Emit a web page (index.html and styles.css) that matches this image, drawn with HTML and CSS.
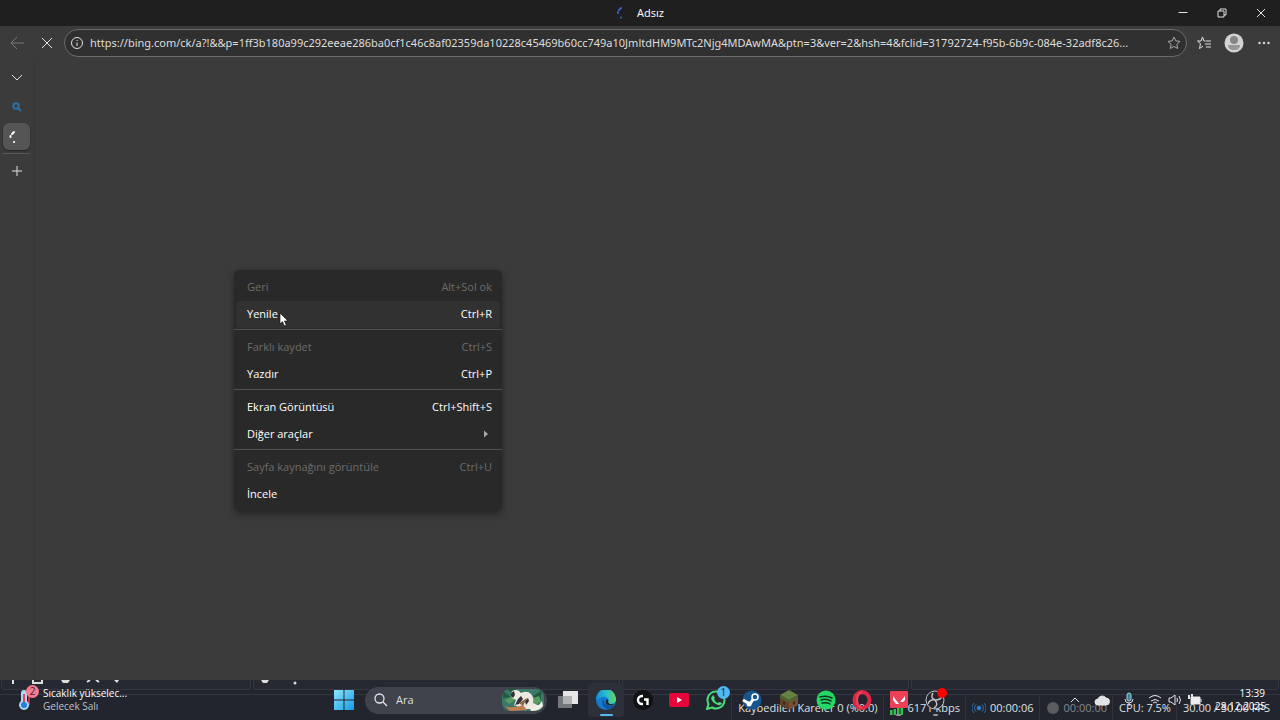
FILE: index.html
```html
<!DOCTYPE html>
<html lang="tr">
<head>
    <meta charset="UTF-8">
    <title>Adsız</title>
    <link rel="stylesheet" href="styles.css">
</head>
<body>
    <header class="titlebar">
        <div class="window-title">
            <svg width="10" height="14" viewBox="0 0 10 14" fill="none" stroke="#3d5fb8" stroke-width="2" stroke-linecap="round"><path d="M5 2L3 4M2 6v1M5 11.500h.1"/></svg>
            <span>Adsız</span>
        </div>
        <div class="window-buttons">
            <button class="window-button" aria-label="Simge durumuna küçült"><svg width="10" height="10" viewBox="0 0 10 10"><path d="M.5 4.500h9"/></svg></button>
            <button class="window-button" aria-label="Geri yükle"><svg width="10" height="10" viewBox="0 0 10 10"><path d="M1 3h6v6H1zM3 3V1h6v6H7"/></svg></button>
            <button class="window-button" aria-label="Kapat"><svg width="10" height="10" viewBox="0 0 10 10"><path d="M1 1l8 8M9 1L1 9"/></svg></button>
        </div>
    </header>

    <div class="toolbar">
        <button class="tool-button" disabled aria-label="Geri"><svg width="16" height="16" viewBox="0 0 16 16"><path d="M15 8H2M8 2L2 8l6 6"/></svg></button>
        <button class="tool-button" aria-label="Durdur"><svg width="12" height="12" viewBox="0 0 12 12"><path d="M1 1l10 10M11 1L1 11"/></svg></button>
        <div class="address">
            <svg width="14" height="14" viewBox="0 0 14 14"><circle cx="7" cy="7" r="5.500"/><path d="M7 6.500V10M7 4v1"/></svg>
            <input class="address-input" type="text" aria-label="Adres" readonly value="https://bing.com/ck/a?!&amp;&amp;p=1ff3b180a99c292eeae286ba0cf1c46c8af02359da10228c45469b60cc749a10JmltdHM9MTc2Njg4MDAwMA&amp;ptn=3&amp;ver=2&amp;hsh=4&amp;fclid=31792724-f95b-6b9c-084e-32adf8c26...">
            <svg class="star" width="14" height="14" viewBox="0 0 14 14"><path d="M7 1l1.800 3.900 4.200.5-3.100 2.900.8 4.200L7 10.400l-3.700 2.100.8-4.200L1 5.400l4.200-.5z"/></svg>
        </div>
        <div class="tools">
            <button class="tool-button" aria-label="Sık kullanılanlar"><svg width="14" height="14" viewBox="0 0 14 14"><path d="M8.500 5H7L5.500 1 4 5H.5l3 2.700-1 4.800L6 10.200M9 5h5M8 8h6M9 11h5"/></svg></button>
            <button class="tool-button" aria-label="Profil">
                <svg class="avatar" width="20" height="20" viewBox="0 0 20 20"><circle cx="10" cy="10" r="9.500" fill="#d3d3d3"/><circle cx="10" cy="7" r="4" fill="#858585"/><path d="M4 12h12c0 3-2 5-6 5s-6-2-6-5z" fill="#979797"/></svg>
            </button>
            <button class="tool-button" aria-label="Ayarlar"><svg class="solid" width="12" height="4" viewBox="0 0 12 4"><circle cx="1.500" cy="2" r="1.200"/><circle cx="6" cy="2" r="1.200"/><circle cx="10.500" cy="2" r="1.200"/></svg></button>
        </div>
    </div>

    <div class="browser">
        <aside class="tabs">
            <button class="tab" aria-label="Sekme menüsü"><svg width="12" height="12" viewBox="0 0 12 12"><path d="M1 4l5 5 5-5"/></svg></button>
            <button class="tab tab-search" aria-label="Arama"><svg width="10" height="10" viewBox="0 0 10 10"><circle cx="4" cy="4" r="2.700"/><path d="M6 6l3 3"/></svg></button>
            <button class="tab active" aria-label="Adsız"><svg width="12" height="14" viewBox="0 0 12 14"><path d="M6 2L4 4M2.500 6v1M6 12h.1"/></svg></button>
            <button class="tab tab-new" aria-label="Yeni sekme"><svg width="12" height="12" viewBox="0 0 12 12"><path d="M6 1v10M1 6h10"/></svg></button>
        </aside>
        <main class="page"></main>
    </div>

    <div class="context-menu" role="menu">
        <button class="menu-item" role="menuitem" disabled><span>Geri</span><span>Alt+Sol ok</span></button>
        <button class="menu-item selected" role="menuitem"><span>Yenile</span><span>Ctrl+R</span></button>
        <hr>
        <button class="menu-item" role="menuitem" disabled><span>Farklı kaydet</span><span>Ctrl+S</span></button>
        <button class="menu-item" role="menuitem"><span>Yazdır</span><span>Ctrl+P</span></button>
        <hr>
        <button class="menu-item" role="menuitem"><span>Ekran Görüntüsü</span><span>Ctrl+Shift+S</span></button>
        <button class="menu-item" role="menuitem"><span>Diğer araçlar</span><svg width="12" height="8" viewBox="0 0 12 8"><path d="M4 .5l4 3.500-4 3.500z" fill="#aaa"/></svg></button>
        <hr>
        <button class="menu-item" role="menuitem" disabled><span>Sayfa kaynağını görüntüle</span><span>Ctrl+U</span></button>
        <button class="menu-item" role="menuitem"><span>İncele</span></button>
    </div>
    <svg class="cursor" width="10" height="15" viewBox="0 0 10 15"><path d="M1 1v11l2.500-2.300L5.300 14l2-1-1.800-4H9z" fill="#fff" stroke="#111" stroke-width=".7"/></svg>

    <footer class="desktop-bar">
        <!-- recorder window showing through the taskbar -->
        <div class="docks">
            <div class="dock dock-scenes">
                <svg width="130" height="5" viewBox="0 0 130 5" fill="none" stroke="#ddd" stroke-width="2"><path d="M11 0v4M31 0v3h9V0M88 0l-3 2M94 0l3 2"/><path d="M59 0h9l-2 3h-5zM112 0h5l-2 3z" fill="#ddd" stroke="none"/></svg>
            </div>
            <div class="dock dock-sources">
                <svg width="60" height="6" viewBox="0 0 60 6" fill="#ddd"><path d="M7 0h8l-2 3H9z"/><circle cx="41" cy="3" r="1.500"/></svg>
            </div>
            <div class="dock dock-mixer"></div>
            <div class="dock dock-controls"></div>
        </div>
        <div class="statusbar">
            <span class="status">Kaybedilen Kareler 0 (%0.0)</span>
            <span class="status"><svg width="14" height="14" viewBox="0 0 14 14" fill="#2fc34b"><path d="M0 9h2.500v5H0zM3.500 8H6v6H3.500zM7 6h2.500v8H7zM10.500 4H13v10h-2.500z"/></svg>6171 kbps</span>
            <span class="status"><svg width="14" height="14" viewBox="0 0 14 14" fill="none" stroke="#2b6fae"><circle cx="7" cy="7" r="2" fill="#3689da"/><path d="M4 3.500a5 5 0 0 0 0 7M10 3.500a5 5 0 0 1 0 7M2 2a7 7 0 0 0 0 10M12 2a7 7 0 0 1 0 10"/></svg>00:00:06</span>
            <span class="status idle"><svg width="14" height="14" viewBox="0 0 14 14"><circle cx="7" cy="7" r="6" fill="#5b5c62"/></svg>00:00:00</span>
            <span class="status">CPU: 7.5%</span>
            <span class="status">30.00 / 30.00 FPS</span>
        </div>

        <div class="taskbar">
            <button class="weather">
                <span class="weather-icon">
                    <svg width="14" height="20" viewBox="0 0 14 20"><path d="M12 6v9" stroke="#c5283f" stroke-width="2"/><path d="M4 3a3 3 0 0 1 6 0v8a5 5 0 1 1-6 0z" fill="#a9d9f5"/><path d="M7 4v10" stroke="#e44461" stroke-width="2"/><circle cx="7" cy="15" r="3" fill="#237ee0"/></svg>
                    <span class="weather-badge">2</span>
                </span>
                <span class="weather-text"><span>Sıcaklık yükselec...</span><span class="weather-sub">Gelecek Salı</span></span>
            </button>

            <div class="task-center">
                <button class="task" aria-label="Başlat"><svg width="20" height="20" viewBox="0 0 20 20"><defs><linearGradient id="win" x2="1" y2="1"><stop stop-color="#8ce5fc"/><stop offset="1" stop-color="#159be8"/></linearGradient></defs><path d="M0 0h9.500v9.500H0zM10.500 0H20v9.500h-9.500zM0 10.500h9.500V20H0zM10.500 10.500H20V20h-9.500z" fill="url(#win)"/></svg></button>
                <label class="search">
                    <svg width="14" height="14" viewBox="0 0 14 14" fill="none" stroke="#e4e5e9" stroke-width="1.300"><circle cx="5.500" cy="5.500" r="4.500"/><path d="M9 9l4 4"/></svg>
                    <input type="text" aria-label="Ara" placeholder="Ara">
                    <svg width="42" height="24" viewBox="0 0 42 24"><rect y="1" width="42" height="22" rx="8" fill="#3b776a"/><path d="M1 3l8 6-8 1zM5 1l8 7 1-7zM31 8l9-6-2 11z" fill="#225b3b"/><path d="M3 12l8-4 2 4-6 4zM29 11l8-3 2 6-7 3z" fill="#5b9b63"/><path d="M9 6q0-4 5-4 3 0 5 3 6-3 10 1 3 3 2 9l7 3-1 3H21l-9-4 2-5-4-2z" fill="#eee9df"/><path d="M9 5l3-2 1 4-2 3-2-2zM16 11l3-3 2 3-4 5-4 1zM23 13l3-3 1 3-3 4z" fill="#343036"/><path d="M3 18q7 3 18-1l4 5-17 1z" fill="#c47d4c"/><path d="M17 15l8-5-4 8z" fill="#8c6654"/><path d="M28 20q8 0 12-7l1 5q-3 5-12 5z" fill="#f2eee1"/></svg>
                </label>
                <button class="task" aria-label="Görev görünümü"><svg width="22" height="20" viewBox="0 0 22 20"><path d="M1 6h14v12H1z" fill="#74777b"/><path d="M6 1h15v13H6z" fill="#e6e6e6"/><path d="M6 6h9v8H6z" fill="#b1b2b4"/></svg></button>
                <div class="apps">
                    <button class="task running" aria-label="Edge"><svg width="20" height="20" viewBox="0 0 20 20"><defs><linearGradient id="edge" x2="1"><stop stop-color="#168bd8"/><stop offset=".5" stop-color="#27bed0"/><stop offset="1" stop-color="#64d55c"/></linearGradient></defs><circle cx="10" cy="10" r="10" fill="#147bd0"/><path d="M0 10A10 10 0 0 1 20 8q1 5-5 6-3 0-3-2 2-3-2-5-5-1-10 3z" fill="url(#edge)"/><path d="M7 9q-3 7 4 10 5 0 7-4-9 3-11-6z" fill="#15549d"/><path d="M11 9q2 1 1 3 1 3 6 2l-1 1q-6 1-7-2-1-2 1-4z" fill="#22262e"/></svg></button>
                    <button class="task" aria-label="G Hub"><svg width="20" height="20" viewBox="0 0 20 20"><circle cx="10" cy="10" r="10" fill="#101113"/><path d="M10 6H9a4 4 0 0 0 0 8h1M11 9.500h3.500V15" fill="none" stroke="#fff" stroke-width="2.400"/></svg></button>
                    <button class="task" aria-label="YouTube"><svg width="20" height="20" viewBox="0 0 20 20"><rect y="3" width="20" height="14" rx="2" fill="#e4063a"/><path d="M8 7l5 3-5 3z" fill="#fff"/></svg></button>
                    <button class="task" aria-label="WhatsApp"><svg width="20" height="20" viewBox="0 0 20 20"><path d="M1 19l1.500-5A8.500 8.500 0 1 1 6 17.500z" fill="#24292d" stroke="#48dd7a" stroke-width="2"/><path d="M7 5l2 3-1 1q1 3 4 4l1-1 3 1q-1 3-4 2-6-2-7-7z" fill="#48dd7a"/></svg><span class="badge">1</span></button>
                    <button class="task" aria-label="Steam"><svg width="20" height="20" viewBox="0 0 20 20"><circle cx="10" cy="10" r="9.500" fill="#17568c"/><path d="M1 10l7 4 4-6" fill="none" stroke="#fff" stroke-width="3"/><circle cx="13" cy="7" r="3" fill="#17568c" stroke="#fff" stroke-width="1.500"/><circle cx="7" cy="14" r="2.500" fill="#fff"/></svg></button>
                    <button class="task" aria-label="Minecraft"><svg width="20" height="20" viewBox="0 0 20 20"><path d="M1 5l9-5 9 5-9 5z" fill="#668242"/><path d="M1 5l9 5v10l-9-5z" fill="#61402c"/><path d="M19 5l-9 5v10l9-5z" fill="#795036"/><path d="M1 5l9 5 9-5v3l-3 1v2l-3-1-3 3-3-2-2-1-4-2z" fill="#4b6530"/><path d="M4 11l2 1v3l-2-1zM14 12l2-1v3l-2 1z" fill="#3b291f"/></svg></button>
                    <button class="task" aria-label="Spotify"><svg width="20" height="20" viewBox="0 0 20 20"><circle cx="10" cy="10" r="9.500" fill="#24d865"/><path d="M4 7q7-2 12 1M5 10q5-2 10 1M6 13q5-1 8 1" fill="none" stroke="#15331f" stroke-width="1.500" stroke-linecap="round"/></svg></button>
                    <button class="task" aria-label="Opera"><svg width="20" height="20" viewBox="0 0 20 20"><ellipse cx="10" cy="10" rx="7.500" ry="8" fill="none" stroke="#db2947" stroke-width="4"/><path d="M10 2q-5 2-5 8t5 8" fill="none" stroke="#f3415b" stroke-width="2"/></svg></button>
                    <button class="task open" aria-label="Valorant"><svg width="20" height="20" viewBox="0 0 20 20"><rect x="1" y="1" width="18" height="17" rx="1" fill="#ed3f55"/><path d="M4 6l6 8H7l-3-4zM16 6l-5 6h3l2-2z" fill="#fff"/></svg></button>
                    <button class="task open" aria-label="OBS Studio"><svg width="20" height="20" viewBox="0 0 20 20" fill="none" stroke="#bfc1c5"><circle cx="10" cy="10" r="9" fill="#23252b"/><path d="M8 3q-3 5 2 7 6 0 7-4M10 10q-5-1-7 4M10 10q4 5-1 8" stroke-width="1.500"/></svg><span class="record-dot"></span></button>
                </div>
            </div>

            <div class="tray">
                <svg width="12" height="12" viewBox="0 0 12 12"><path d="M2 8l4-4 4 4"/></svg>
                <svg width="16" height="12" viewBox="0 0 16 12"><path d="M4 11a3 3 0 0 1 0-6 4.500 4.500 0 0 1 8-1 3.500 3.500 0 0 1 0 7z" fill="#e1e3e5"/></svg>
                <svg width="12" height="16" viewBox="0 0 12 16"><rect x="4" y="1" width="4" height="8" rx="2" fill="#448199" stroke="#9fcfe0"/><path d="M2 7q0 4 4 4t4-4M6 11v3"/></svg>
                <div class="tray-system">
                    <svg width="14" height="12" viewBox="0 0 14 12"><path d="M1 4q6-5 12 0M3 7q4-3 8 0M5 9q2-2 4 0"/></svg>
                    <svg width="14" height="12" viewBox="0 0 14 12"><path d="M1 4h2l4-3v10L3 8H1zM9 4q1 2 0 4M11 2q3 4 0 8"/></svg>
                    <svg width="14" height="12" viewBox="0 0 14 12"><path d="M3 3h9v7H3zM13 5v3" fill="#eee"/><path d="M1 1v4M4 0v3" stroke-width="2"/></svg>
                </div>
                <div class="clock"><span>13:39</span><span>28.12.2025</span></div>
            </div>
        </div>
    </footer>
</body>
</html>
```
FILE: styles.css
```css
* {
    box-sizing: border-box;
}

body {
    margin: 0;
    height: 100vh;
    display: flex;
    flex-direction: column;
    overflow: hidden;
    position: relative;
    background: #3b3b3b;
    color: #fff;
    font-family: "Open Sans", "Noto Sans", sans-serif;
    font-size: 11px;
    line-height: 14px;
}

button,
input {
    font: inherit;
    color: inherit;
    border: none;
    background: none;
    padding: 0;
    margin: 0;
}

svg {
    display: block;
    flex-shrink: 0;
}

.titlebar {
    display: grid;
    grid-template-columns: 1fr auto 1fr;
    align-items: center;
    height: 26px;
    background: #1f1f1f;
}

.window-title {
    grid-column: 2;
    display: flex;
    align-items: center;
    gap: 11px;
}

.window-buttons {
    display: flex;
    justify-content: flex-end;
}

.window-button {
    width: 39px;
    height: 26px;
    display: flex;
    align-items: center;
    justify-content: center;
}

.window-button svg,
.tool-button svg,
.address svg,
.tab svg {
    fill: none;
    stroke: #e2e2e2;
}

.toolbar {
    display: flex;
    align-items: center;
    height: 34px;
    padding: 0 1px 0 2px;
}

.tool-button {
    width: 30px;
    height: 28px;
    display: flex;
    align-items: center;
    justify-content: center;
}

.tool-button:disabled svg {
    stroke: #777;
}

.tool-button .avatar {
    stroke: none;
}

.tool-button .solid {
    fill: #ddd;
    stroke: none;
}

.address {
    flex: 1;
    height: 28px;
    display: flex;
    align-items: center;
    gap: 6px;
    margin-left: 2px;
    padding: 0 5px;
    border: 1px solid #6b6b6b;
    border-radius: 14px;
    background: #303030;
}

.address-input {
    flex: 1;
    min-width: 0;
    color: #dedede;
    font-family: "Noto Sans", sans-serif;
    outline: none;
    text-overflow: ellipsis;
}

.address .star {
    stroke: #aaa;
}

.tools {
    display: flex;
    padding-left: 2px;
}

.browser {
    flex: 1;
    display: flex;
    min-height: 0;
}

.tabs {
    width: 35px;
    padding: 3px;
    border-right: 1px solid #373737;
}

.tab {
    width: 27px;
    height: 27px;
    margin-bottom: 3px;
    display: flex;
    align-items: center;
    justify-content: center;
    border-radius: 6px;
}

.tab-search svg {
    stroke: #2d6fa5;
    stroke-width: 2;
}

.tab.active {
    justify-content: flex-start;
    padding-left: 5px;
    background: #555;
    box-shadow: 0 1px 2px #222;
}

.tab.active svg {
    stroke: #fff;
    stroke-width: 2;
    stroke-linecap: round;
}

.tab-new {
    position: relative;
    margin-top: 7px;
}

.tab-new::before {
    content: "";
    position: absolute;
    left: 0;
    right: 0;
    top: -4px;
    border-top: 1px solid #575757;
}

.page {
    flex: 1;
}

.context-menu {
    position: absolute;
    left: 234px;
    top: 270px;
    width: 268px;
    padding: 4px 0 3px;
    border-radius: 5px;
    background: #292929;
    box-shadow: 0 3px 7px rgba(0, 0, 0, 0.4);
}

.menu-item {
    display: flex;
    align-items: center;
    justify-content: space-between;
    width: 264px;
    height: 27px;
    margin: 0 2px;
    padding: 0 8px 2px 11px;
    border-radius: 4px;
}

.menu-item:disabled {
    color: #6c6c6c;
}

.menu-item.selected {
    background: #313131;
}

.context-menu hr {
    margin: 1px 0 4px;
    border: none;
    border-top: 1px solid #515151;
}

.cursor {
    position: absolute;
    left: 279px;
    top: 312px;
}

/* Desktop bar */
.desktop-bar {
    position: relative;
    height: 40px;
    background: #22252e;
}

.docks {
    display: flex;
    gap: 2px;
    height: 15px;
    padding: 0 1px 4px;
    border-bottom: 1px solid #343741;
}

.dock {
    border: 1px solid #353842;
    border-top: none;
    border-radius: 0 0 3px 3px;
    background: #262932;
}

.dock-scenes {
    width: 250px;
}

.dock-sources {
    width: 367px;
}

.dock-mixer {
    width: 287px;
}

.dock-controls {
    flex: 1;
}

.statusbar {
    display: flex;
    justify-content: flex-end;
    height: 25px;
    padding-right: 5px;
}

.status {
    display: flex;
    align-items: center;
    gap: 4px;
    padding: 0 5px 0 6px;
    border-left: 1px solid #30333c;
    color: #dfe0e3;
    white-space: nowrap;
}

.status.idle {
    color: #85878d;
}

.taskbar {
    position: absolute;
    inset: 0;
    display: grid;
    grid-template-columns: 1fr auto 1fr;
    align-items: center;
}

.weather {
    display: flex;
    align-items: center;
    justify-self: start;
    gap: 6px;
    padding-left: 17px;
    text-align: left;
}

.weather-icon {
    position: relative;
    width: 20px;
}

.weather-badge {
    position: absolute;
    top: -5px;
    right: -2px;
    width: 13px;
    height: 13px;
    border-radius: 50%;
    background: #f27c91;
    color: #47212c;
    font-size: 10px;
    line-height: 13px;
    text-align: center;
}

.weather-text {
    display: flex;
    flex-direction: column;
    font-size: 10px;
    line-height: 13px;
}

.weather-sub {
    color: #bfc1c6;
}

.task-center {
    display: flex;
    align-items: center;
}

.task {
    position: relative;
    width: 36px;
    height: 34px;
    display: flex;
    align-items: center;
    justify-content: center;
    border-radius: 4px;
}

.search {
    display: flex;
    align-items: center;
    gap: 8px;
    width: 182px;
    height: 27px;
    margin: 0 3px;
    padding: 0 3px 0 9px;
    border-radius: 14px;
    background: #40434c;
}

.search input {
    flex: 1;
    min-width: 0;
}

.search input::placeholder {
    color: #ddd;
    opacity: 1;
}

.apps {
    display: grid;
    grid-template-columns: repeat(10, 1fr);
    width: 366px;
    margin-left: 2px;
}

.running {
    background: #2d3038;
}

.running::after,
.open::after {
    content: "";
    position: absolute;
    bottom: 1px;
    width: 5px;
    height: 2px;
    border-radius: 1px;
    background: #92959c;
}

.running::after {
    width: 13px;
    background: #52baf0;
}

.badge {
    position: absolute;
    top: 3px;
    right: 4px;
    width: 13px;
    height: 13px;
    border-radius: 50%;
    background: #53b7ef;
    color: #142b3b;
    font-size: 10px;
    line-height: 13px;
}

.record-dot {
    position: absolute;
    top: 5px;
    right: 6px;
    width: 10px;
    height: 10px;
    border-radius: 50%;
    background: #f00;
}

.tray {
    display: flex;
    align-items: center;
    justify-self: end;
    gap: 13px;
    padding-right: 15px;
}

.tray svg {
    fill: none;
    stroke: #e5e5e5;
}

.tray-system {
    display: flex;
    gap: 6px;
}

.clock {
    display: flex;
    flex-direction: column;
    width: 50px;
    text-align: right;
    font-size: 10px;
    line-height: 13px;
}
```
